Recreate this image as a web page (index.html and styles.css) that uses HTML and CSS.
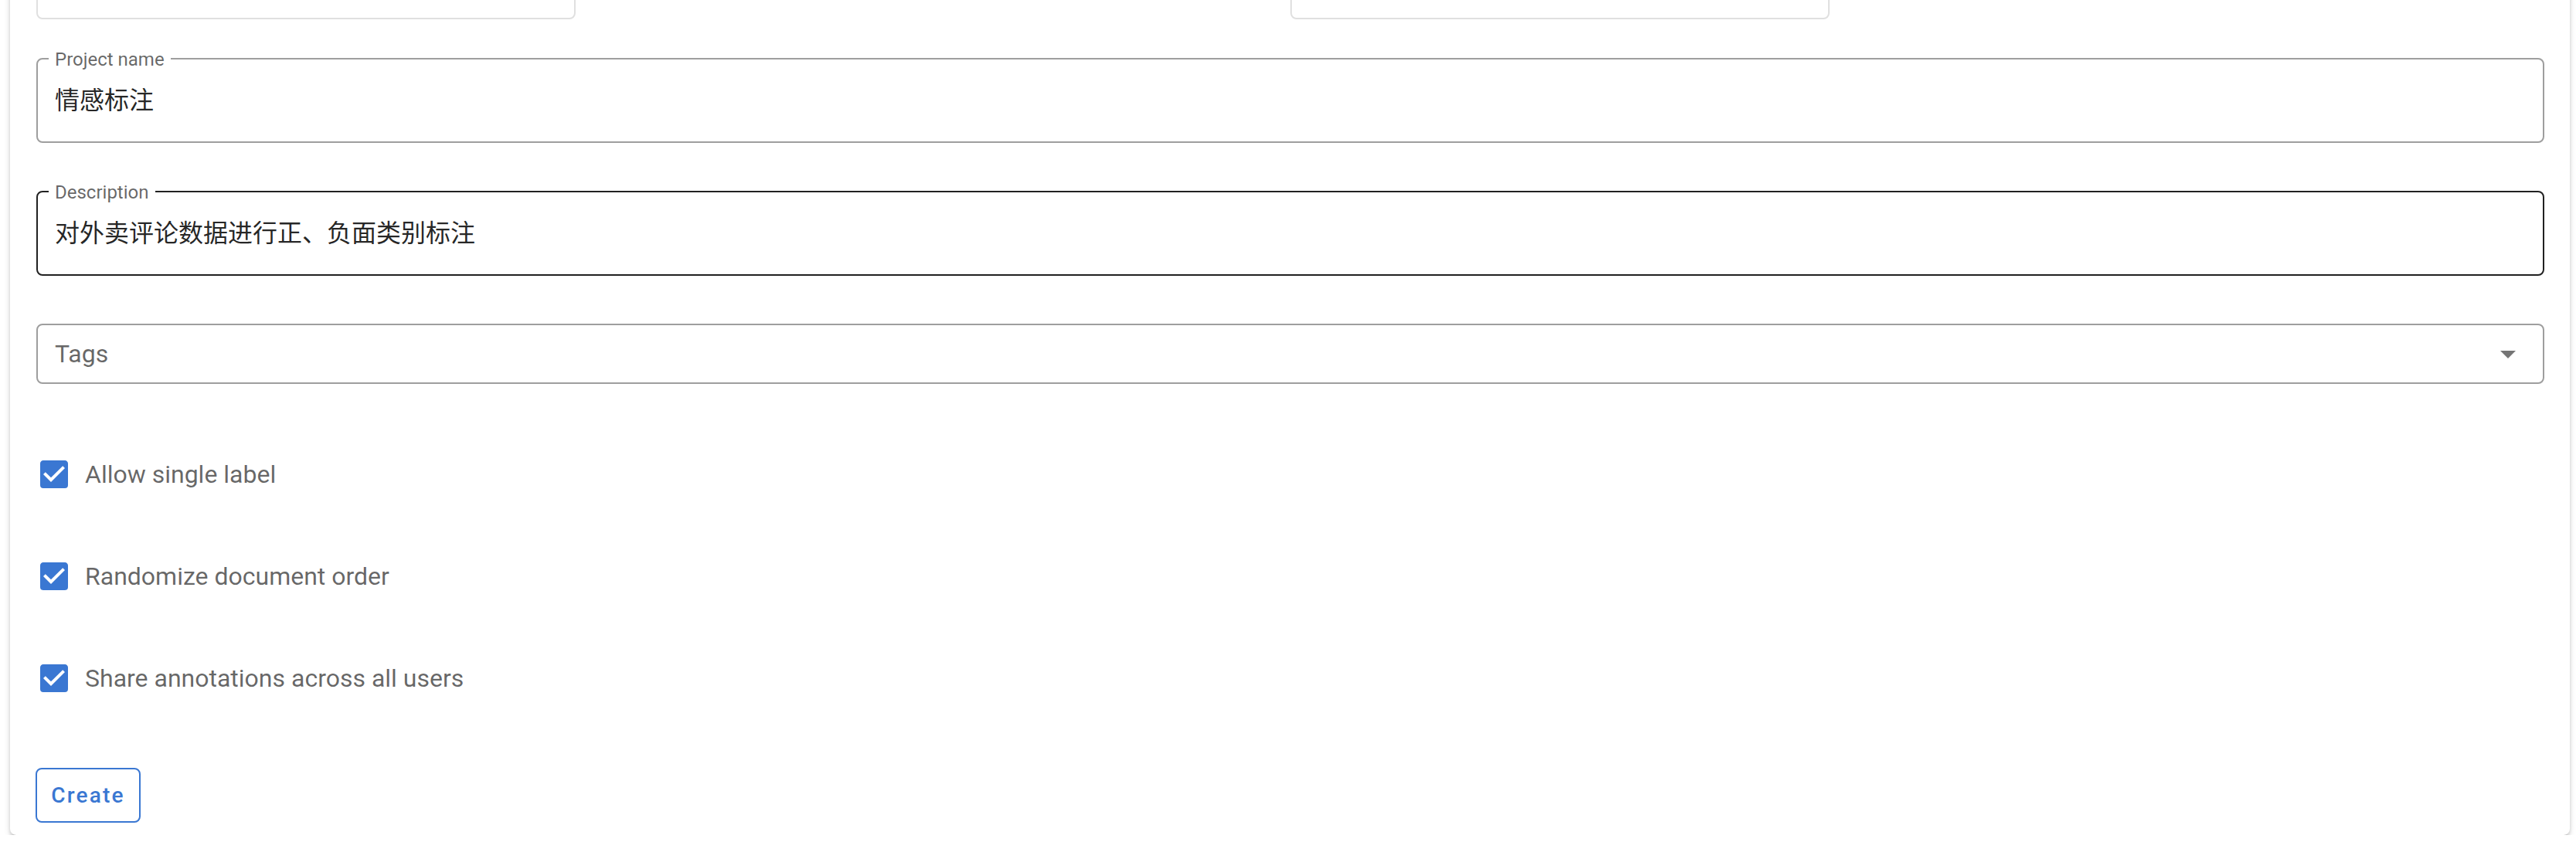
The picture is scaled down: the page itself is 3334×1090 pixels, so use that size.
FILE: index.html
```html
<!DOCTYPE html>
<html lang="en">
<head>
<meta charset="utf-8">
<title>Create project</title>
<link rel="stylesheet" href="styles.css">
</head>
<body>
<div class="card">
  <div class="types">
    <div class="type-box"></div>
    <div class="type-box"></div>
  </div>

  <div class="field field-name">
    <span class="float-label">Project name</span>
    <span class="value">情感标注</span>
  </div>

  <div class="field field-desc">
    <span class="float-label">Description</span>
    <span class="value">对外卖评论数据进行正、负面类别标注</span>
  </div>

  <div class="field field-tags">
    <span class="placeholder">Tags</span>
    <svg class="arrow" viewBox="0 0 24 24" width="48" height="48"><path d="M7,10L12,15L17,10H7Z"/></svg>
  </div>

  <div class="checks">
    <label class="check-row">
      <svg class="check" viewBox="0 0 24 24" width="48" height="48"><path d="M10,17L5,12L6.41,10.58L10,14.17L17.59,6.58L19,8M19,3H5C3.89,3 3,3.89 3,5V19A2,2 0 0,0 5,21H19A2,2 0 0,0 21,19V5C21,3.89 20.1,3 19,3Z"/></svg>
      <span class="check-label">Allow single label</span>
    </label>
    <label class="check-row">
      <svg class="check" viewBox="0 0 24 24" width="48" height="48"><path d="M10,17L5,12L6.41,10.58L10,14.17L17.59,6.58L19,8M19,3H5C3.89,3 3,3.89 3,5V19A2,2 0 0,0 5,21H19A2,2 0 0,0 21,19V5C21,3.89 20.1,3 19,3Z"/></svg>
      <span class="check-label">Randomize document order</span>
    </label>
    <label class="check-row">
      <svg class="check" viewBox="0 0 24 24" width="48" height="48"><path d="M10,17L5,12L6.41,10.58L10,14.17L17.59,6.58L19,8M19,3H5C3.89,3 3,3.89 3,5V19A2,2 0 0,0 5,21H19A2,2 0 0,0 21,19V5C21,3.89 20.1,3 19,3Z"/></svg>
      <span class="check-label">Share annotations across all users</span>
    </label>
  </div>

  <div class="actions">
    <button class="btn-create" type="button">Create</button>
  </div>
</div>
</body>
</html>
```

FILE: styles.css
```css
html, body {
  margin: 0;
  padding: 0;
  background: #ffffff;
  overflow: hidden;
}

body {
  font-family: Roboto, "Noto Sans CJK SC", sans-serif;
  color: rgba(0, 0, 0, 0.87);
}

.card {
  box-sizing: border-box;
  width: 3313px;
  margin: -60px 0 0 13px;
  padding: 0 33px 16px 34px;
  background: #fff;
  border-radius: 8px;
  box-shadow: 0 6px 2px -4px rgba(0, 0, 0, 0.2),
              0 4px 4px 0 rgba(0, 0, 0, 0.14),
              0 2px 10px 0 rgba(0, 0, 0, 0.12);
}

.types {
  display: grid;
  grid-template-columns: 1fr 1fr;
}

.type-box {
  box-sizing: border-box;
  width: 698px;
  height: 85px;
  border: 2px solid #e0e0e0;
  border-radius: 8px;
}

.field {
  position: relative;
  box-sizing: border-box;
  display: flex;
  align-items: center;
  border: 2px solid #9e9e9e;
  border-radius: 8px;
  padding: 0 21px 0 22px;
}

.field-name {
  height: 110px;
  margin-top: 50px;
}

.field-desc {
  height: 110px;
  margin-top: 62px;
  border-color: #212121;
}

.field-tags {
  height: 78px;
  margin-top: 62px;
  justify-content: space-between;
}

.float-label {
  position: absolute;
  top: -14px;
  left: 14px;
  padding: 0 8px;
  background: #fff;
  font-size: 24px;
  line-height: 28px;
  color: rgba(0, 0, 0, 0.6);
}

.value {
  font-size: 32px;
  line-height: 40px;
  color: rgba(0, 0, 0, 0.87);
}

.placeholder {
  font-size: 32px;
  line-height: 40px;
  color: rgba(0, 0, 0, 0.6);
}

.arrow {
  fill: rgba(0, 0, 0, 0.54);
  display: block;
}

.checks {
  display: flex;
  flex-direction: column;
  gap: 84px;
  margin-top: 93px;
}

.check-row {
  display: flex;
  align-items: center;
  height: 48px;
  margin-left: -1px;
}

.check {
  display: block;
  fill: #3a77d2;
  margin-right: 16px;
}

.check-label {
  font-size: 32px;
  line-height: 40px;
  color: rgba(0, 0, 0, 0.6);
}

.actions {
  display: flex;
  margin-top: 92px;
}

.btn-create {
  box-sizing: border-box;
  height: 71px;
  min-width: 136px;
  margin-left: -1px;
  padding: 0 18px;
  border: 2px solid #3a77d2;
  border-radius: 8px;
  background: #fff;
  color: #3a77d2;
  font-family: Roboto, sans-serif;
  font-weight: 500;
  font-size: 28px;
  letter-spacing: 2.2px;
}
```
